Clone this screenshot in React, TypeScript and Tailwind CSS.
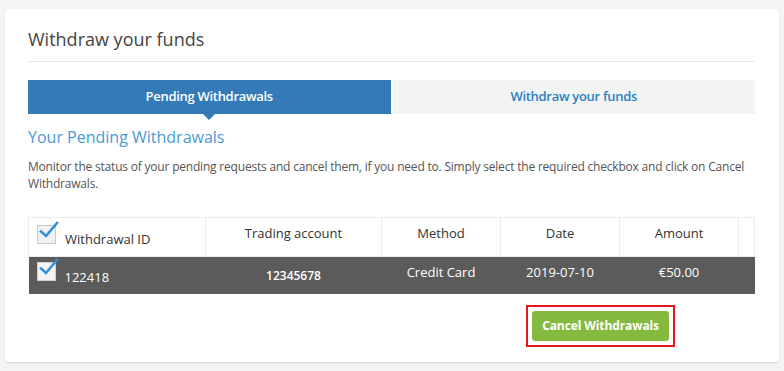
import { useState } from 'react'

interface Withdrawal {
  id: string
  account: string
  method: string
  date: string
  amount: string
}

const rows: Withdrawal[] = [
  { id: '122418', account: '12345678', method: 'Credit Card', date: '2019-07-10', amount: '€50.00' },
]

function CheckBox({ checked, dark }: { checked: boolean; dark?: boolean }) {
  return (
    <span className="relative inline-block w-[19px] h-[19px] shrink-0">
      <span
        className={
          dark
            ? 'absolute inset-0 bg-[#f4f4f4] border border-[#cfcfcf]'
            : 'absolute inset-0 bg-[#f1f1f1] border border-[#c9c9c9]'
        }
      />
      {checked && (
        <svg className="absolute left-[2px] top-[-5px]" width="20" height="20" viewBox="0 0 20 20" fill="none">
          <path d="M2 11.5 L7 16 L18 3" stroke="#2f8fd8" strokeWidth="2.6" strokeLinecap="square" />
        </svg>
      )}
    </span>
  )
}

export default function App() {
  const [tab, setTab] = useState<'pending' | 'withdraw'>('pending')
  const [checked, setChecked] = useState(true)

  return (
    <div className="w-[784px] h-[371px] bg-[#f3f4f4] pt-[9px] pl-[5px] font-['Open_Sans',sans-serif]">
      <div className="w-[774px] h-[353px] bg-white rounded-[4px] shadow-[0_1px_2px_rgba(0,0,0,0.12)] pt-[18px] pl-[23px] pr-[24px]">
        {/* Header */}
        <h1 className="text-[18px] leading-[24px] text-[#444]">Withdraw your funds</h1>
        <div className="mt-[10px] h-px bg-[#e8e8e8]" />

        {/* Tabs */}
        <div className="mt-[18px] flex gap-[2px] h-[34px]">
          <button
            onClick={() => setTab('pending')}
            className="relative flex-1 bg-[#337ab7] text-white text-[13px] font-semibold tracking-[-0.3px]"
          >
            Pending Withdrawals
            {tab === 'pending' && (
              <span className="absolute left-1/2 -translate-x-1/2 top-full w-0 h-0 border-l-[6px] border-r-[6px] border-t-[6px] border-l-transparent border-r-transparent border-t-[#337ab7]" />
            )}
          </button>
          <button
            onClick={() => setTab('withdraw')}
            className="flex-1 bg-[#f2f4f4] text-[#2d80c2] text-[13px] font-semibold tracking-[-0.3px]"
          >
            Withdraw your funds
          </button>
        </div>

        {/* Section */}
        <h2 className="mt-[12px] text-[16px] leading-[22px] text-[#4a9ad3]">Your Pending Withdrawals</h2>
        <p className="mt-[10px] text-[12px] leading-[17px] text-[#555] tracking-[-0.2px]">
          Monitor the status of your pending requests and cancel them, if you need to. Simply select the required checkbox and click on Cancel Withdrawals.
        </p>

        {/* Table */}
        <table className="mt-[25px] w-[726px] border-collapse text-[13px] table-fixed">
          <colgroup>
            <col className="w-[177px]" />
            <col className="w-[176px]" />
            <col className="w-[119px]" />
            <col className="w-[119px]" />
            <col className="w-[119px]" />
            <col className="w-[16px]" />
          </colgroup>
          <thead>
            <tr className="h-[39px] text-[#333]">
              <th className="border border-[#ececec] font-normal text-left pl-[8px] align-bottom pb-[12px]">
                <span className="flex items-end gap-[9px]">
                  <CheckBox checked={checked} />
                  <span className="leading-[16px] mb-[-3px]">Withdrawal ID</span>
                </span>
              </th>
              <th className="border border-[#ececec] font-normal align-middle pb-[6px]">Trading account</th>
              <th className="border border-[#ececec] font-normal align-middle pb-[6px]">Method</th>
              <th className="border border-[#ececec] font-normal align-middle pb-[6px]">Date</th>
              <th className="border border-[#ececec] font-normal align-middle pb-[6px]">Amount</th>
              <th className="border border-[#ececec]" />
            </tr>
          </thead>
          <tbody>
            {rows.map((r) => (
              <tr key={r.id} className="h-[37px] bg-[#5b5b5b] text-white" onClick={() => setChecked(!checked)}>
                <td className="pl-[8px] align-bottom pb-[13px]">
                  <span className="flex items-end gap-[9px]">
                    <CheckBox checked={checked} dark />
                    <span className="leading-[16px] mb-[-4px]">{r.id}</span>
                  </span>
                </td>
                <td className="text-center font-semibold text-[12px] pt-[2px]">{r.account}</td>
                <td className="text-center pb-[6px]">{r.method}</td>
                <td className="text-center pb-[6px]">{r.date}</td>
                <td className="text-center pb-[6px]">{r.amount}</td>
                <td />
              </tr>
            ))}
          </tbody>
        </table>

        {/* Actions */}
        <div className="flex justify-end pr-[80px] mt-[11px]">
          <div className="border-2 border-[#e8141b] p-[4px]">
            <button className="h-[30px] px-[10px] rounded-[3px] bg-[#84ba40] text-white text-[12px] font-bold tracking-[-0.1px]">
              Cancel Withdrawals
            </button>
          </div>
        </div>
      </div>
    </div>
  )
}
